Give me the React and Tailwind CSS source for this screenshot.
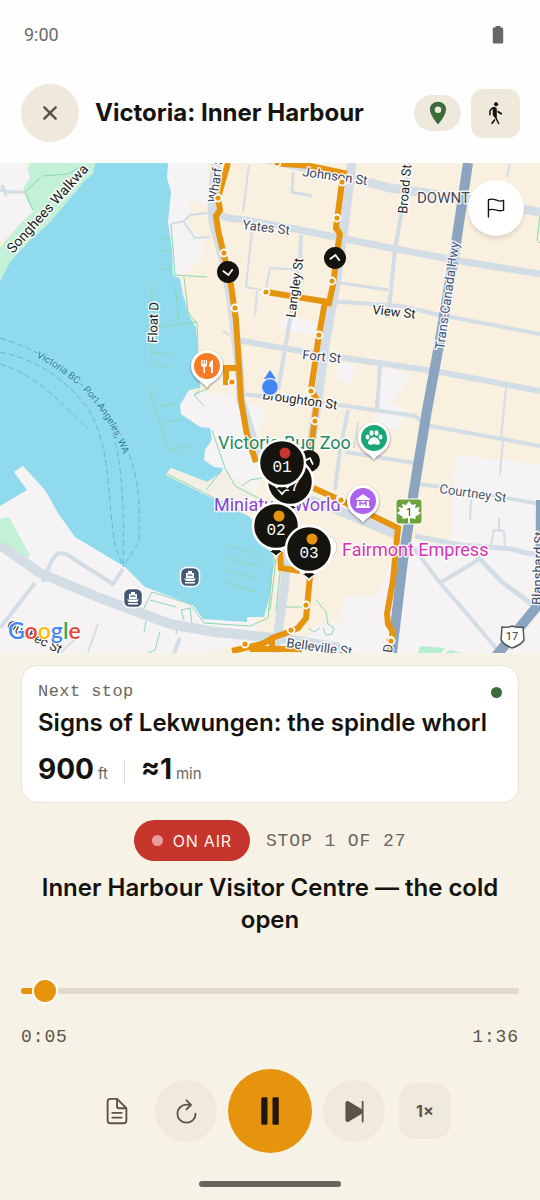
import React, { useState } from 'react';
import {
  IoClose,
  IoDocumentTextOutline,
  IoFlagOutline,
  IoLocationSharp,
  IoPause,
  IoPlaySkipForward,
  IoRefreshOutline,
  IoWalk,
} from 'react-icons/io5';

const MONO = "font-['Liberation_Mono',monospace]";

// road centre lines, grouped by stroke width
const roads = [
  { w: 10, d: 'M0 545 40 573 100 598 170 624 215 632 285 639 340 648' },
  { w: 9, d: 'M216 163 212 205 213 222 224 262 231 300 239 365 241 400 255 446 290 494 320 503 400 536' },
  { w: 9, d: 'M352 163 345 220 335 290 325 345 318 400 310 450 300 485 290 530 284 590 275 653' },
  { w: 9, d: 'M262 158 340 175 390 188 420 192 470 200 540 212' },
  { w: 7, d: 'M215 213 228 218 245 220 290 228 380 246 460 261 540 274' },
  { w: 6, d: 'M238 340 270 346 345 358 440 372 540 391' },
  { w: 5, d: 'M415 536 460 545 512 549 526 553 540 555M477 556 502 582 540 610' },
  { w: 4, d: 'M410 163 395 250 388 318M301 235 300 262 290 320 278 390' },
  { w: 4, d: 'M330 301 400 306 440 315 540 334M240 394 270 397 340 405 415 416 425 425 540 446' },
  { w: 4, d: 'M348 410 340 450 335 490M345 452 414 463M418 484 450 488 540 504' },
  { w: 4, d: 'M380 366 377 410M43 582 52 560 58 553 66 554 113 584 123 569M35 583 0 628' },
  { w: 4, d: 'M180 638 174 653M414 548 440 583 462 608 500 653M440 583 478 560' },
  { w: 3, d: 'M0 190 8 192 25 192M2 185 6 196M293 172 292 192 312 196M335 282 388 290' },
  { w: 2, d: 'M171 224 184 221 190 215 208 213M183 221 195 238 210 237' },
  { w: 2, d: 'M249 165 243 212M252 230 246 287 266 291M257 291 255 315M270 268 300 270M270 268 266 290' },
  { w: 2, d: 'M506 388 501 438M503 440 500 475M471 500 470 520M491 545 494 530 504 531 505 548M499 530V518' },
  { w: 2, d: 'M98 624 88 652M60 653 74 640M358 422 354 448M510 163 507 177M376 400V410M223 331 229 335' },
];

const piers = [
  'M171 224 175 275 207 277M184 277 188 312 197 324 198 350M158 270 172 268M160 250 171 252',
  'M162 240 172 238M152 285V365M152 328 197 322M152 352 172 354M152 366H168M175 284 179 322',
  'M150 390 168 450 190 446M160 406 178 404M166 422 183 419M200 390 194 395 204 406M194 395 209 388',
  'M212 430 225 468 235 486 262 500M167 474 240 511M222 470 206 490M242 486 250 480 262 478',
  'M228 545 262 555M228 558 260 567M226 570 258 580M225 582 256 592',
  'M142 612 152 592 190 604 204 623 250 626 268 618 272 570 278 550M148 610 144 632',
  'M150 600 176 607M178 622 192 624 190 608 181 610 184 620M160 632 155 650 148 653M178 622 176 634',
  'M40 178 25 192 33 210M42 176 68 174 82 166M285 607 308 607M316 600 326 612 328 624 334 628 332 634 326 635 323 628',
  'M308 628 314 632 320 628M276 560 270 610M281 562 276 612M540 215 537 240 540 243',
];

const route = [
  'M228 163 218 198 220 210 216 216 218 230 224 255 231 285 236 320 239 367 241 400 247 435 256 462',
  'M239 368H226V382H232',
  'M274 163 310 166 344 173 342 182 336 228 340 234 338 246 333 285 329 303 325 302 319 335 311 390 317 400 311 450',
  'M266 292 328 302',
  'M300 482 340 500 398 528 393 580 387 614 388 624 393 632 389 653',
  'M280 552 281 568 300 571M310 576 306 618 298 628 286 633 272 638V650M232 651 262 644 275 637M250 649H302',
];

const routeDots = [
  [218, 198], [224, 253], [235, 308], [266, 292], [232, 382], [277, 163], [342, 182], [337, 218], [332, 281],
  [319, 335], [311, 391], [315, 421], [341, 500], [306, 605], [291, 630], [245, 644], [391, 641],
];

const streets = [
  { name: 'Yates St', x: 242, y: 229, r: 7, c: '#3c4660' },
  { name: 'Johnson St', x: 302, y: 176, r: 8, c: '#3c4660' },
  { name: 'View St', x: 372, y: 314, r: 6 },
  { name: 'Fort St', x: 302, y: 359, r: 6, c: '#3c4660' },
  { name: 'Broughton St', x: 262, y: 399, r: 8 },
  { name: 'Courtney St', x: 439, y: 493, r: 8, c: '#4b5868' },
  { name: 'Belleville St', x: 286, y: 647, r: 8, c: '#3c4660' },
  { name: 'Wharf St', x: 217, y: 203, r: -82, c: '#3c4660', s: 13 },
  { name: 'Broad St', x: 407, y: 214, r: -85 },
  { name: 'Langley St', x: 295, y: 318, r: -82 },
  { name: 'Float D', x: 157, y: 343, r: -88 },
  { name: 'Songhees Walkwa', x: 13, y: 254, r: -48, s: 14 },
  { name: 'Trans-Canada Hwy', x: 444, y: 350, r: -82, c: '#45557f' },
  { name: 'Blanshard St', x: 541, y: 605, r: -88, c: '#3c4660' },
  { name: 'Quebec St', x: 6, y: 628, r: 26 },
  { name: 'Do', x: 392, y: 653, r: -84, c: '#3c4660' },
];

const MapLabel = ({ x, y, r = 0, c = '#1d1f24', s = 13, children }) => (
  <text
    transform={`translate(${x} ${y}) rotate(${r})`}
    fill={c}
    stroke="#fff"
    strokeOpacity="0.85"
    strokeWidth="3"
    strokeLinejoin="round"
    paintOrder="stroke"
    fontSize={s}
  >
    {children}
  </text>
);

const Chevron = ({ x, y, r = 0 }) => (
  <g transform={`translate(${x} ${y}) rotate(${r})`}>
    <circle r="11" fill="#15130e" />
    <path d="M-5 2 0-3 5 2" fill="none" stroke="#fff" strokeWidth="1.8" />
  </g>
);

const PlacePin = ({ x, y, color, children }) => (
  <g transform={`translate(${x} ${y})`}>
    <path
      d="M0 21C-3 15-16 12-16-1A16 16 0 0 1 16-1C16 12 3 15 0 21Z"
      fill="#fff"
      className="drop-shadow-[0_1px_1px_rgba(0,0,0,0.45)]"
    />
    <circle r="13" cy="-1" fill={color} />
    {children}
  </g>
);

const StopPin = ({ x, y, dot, children }) => (
  <g transform={`translate(${x} ${y})`}>
    <path d="M-8 21 0 31 8 21Z" fill="#15130e" stroke="#fff" strokeWidth="2" />
    <circle r="23" fill="#15130e" stroke="#fff" strokeWidth="2.5" />
    <path d="M-6 25H6L0 29Z" fill="#15130e" />
    <circle cx="3" cy="-10" r="5.5" fill={dot} />
    <text y="9" textAnchor="middle" fontSize="16" fill="#fff" className={MONO}>{children}</text>
  </g>
);

const FerryStop = ({ x, y }) => (
  <g transform={`translate(${x} ${y})`}>
    <rect x="-9.500" y="-9.500" width="19" height="19" rx="6" fill="#445a74" stroke="#fff" strokeWidth="1.5" />
    <path d="M-2-6H2V-4H4V1H-4V-4H-2ZM-6 1.500H6L4 4H-4ZM-5 5H5V6.500H-5Z" fill="#fff" />
    <path d="M-2.500-2.500H2.500V-1.300H-2.500Z" fill="#445a74" />
  </g>
);

const TourMap = () => (
  <svg
    viewBox="0 163 540 490"
    className="block h-auto w-full font-[Roboto,sans-serif]"
    role="img"
    aria-label="Map of Victoria Inner Harbour"
  >
    <rect y="163" width="540" height="490" fill="#f9f0df" />

    {/* lighter blocks */}
    <g fill="#f5f3f4">
      <path d="M160 163H208L207 205 190 200 188 225 206 240 200 262 180 275H165Z" />
      <path d="M175 390 235 395 245 440 262 478 250 500 200 470Z" />
      <path d="M455 455 540 464V653H350L402 540 450 545Z" />
      <path d="M0 653V460L240 560 260 640 205 653Z" />
      <path d="M345 595H440V653H300L312 628 340 620ZM382 367 412 374 395 400 378 410Z" />
      <path d="M283 315 320 322 312 335 280 330ZM338 362 355 366 350 385 337 380ZM236 400 265 408 258 440 245 425Z" />
      <path d="M376 400 405 408 400 430 375 425Z" />
    </g>

    {/* harbour */}
    <path
      d="M95 163H168L167 178 171 192 168 222 172 250 173 275 180 279 183 295 189 315 196 328 199 365 200 388 189 390 180 405 181 414 200 427 210 428 212 439 205 450 204 460 214 467 223 468 218 478 207 482 171 468 166 475 202 493 250 517 266 540 274 555 271 590 264 617 247 617V622L203 619 193 605 145 587 125 567 75 537 58 513 45 490 23 466 14 472 27 490 0 506V281L10 262 30 240 50 222 85 180 93 174Z"
      fill="#90daee"
    />
    <path d="M95 163H30L22 180 24 192 30 212 0 248V281L10 262 30 240 50 222 85 180 93 174Z" fill="#c2f1d7" />
    <path d="M0 163H26L30 178 22 190 33 212 0 242Z" fill="#f5f3f4" />
    <path d="M0 519 9 517 30 555 24 562 0 546Z" fill="#c2f1d7" />
    <path d="M420 646 445 648 441 653H418ZM450 650 462 653H445Z" fill="#b5efce" />
    <path d="M166 475 171 468 207 482 225 470 262 500 256 516 202 493Z" fill="#f3efe4" />

    <g fill="none" stroke="#5cbcd4" strokeDasharray="6 3">
      <path d="M0 338C40 350 70 370 95 400 120 430 125 480 123 567" />
      <path d="M0 352C40 360 65 380 88 408 112 450 106 490 115 545L123 567" />
      <path d="M0 364C45 378 70 415 88 428M118 430C134 460 139 485 139 510V542L123 567" />
    </g>

    <g fill="none" stroke="#8bd8b4" strokeWidth="1">
      {piers.map((d) => <path key={d} d={d} />)}
    </g>

    <g fill="none" stroke="#d3dde5" strokeLinejoin="round">
      {roads.map(({ w, d }) => <path key={d} d={d} strokeWidth={w} />)}
    </g>
    <g fill="none" stroke="#8ba5c1" strokeWidth="10">
      <path d="M468 163 455 250 440 340 427 410 414 490 403 560 392 653" />
      <path d="M541 500 540 603 496 656" />
    </g>

    <g fill="none" stroke="#e6930e" strokeWidth="6">
      {route.map((d) => <path key={d} d={d} />)}
    </g>

    {streets.map(({ name, ...pos }) => <MapLabel key={name} {...pos}>{name}</MapLabel>)}
    <MapLabel x={417} y={203} c="#4a4a50" s={15}>DOWNT</MapLabel>
    <MapLabel x={218} y={449} c="#1d8a62" s={18}>Victoria Bug Zoo</MapLabel>
    <MapLabel x={214} y={511} c="#8642d8" s={18}>Miniature World</MapLabel>

    <path id="ferry-line" d="M36 357C80 380 108 410 126 462" fill="none" />
    <text fontSize="10" fill="#22809c" stroke="#a7e4f3" strokeWidth="1" paintOrder="stroke">
      <textPath href="#ferry-line">Victoria BC - Port Angeles, WA</textPath>
    </text>

    {routeDots.map(([x, y]) => (
      <circle key={`${x}-${y}`} cx={x} cy={y} r="3.500" fill="#e6930e" stroke="#fff" strokeWidth="1.8" />
    ))}

    <Chevron x={228} y={272} r={172} />
    <Chevron x={335} y={258} r={8} />
    <Chevron x={309} y={461} r={20} />

    <PlacePin x={207} y={367} color="#fa7b26">
      <path d="M-6-7V-3Q-6 0-3.500 0V6H-2V0Q0 0 0-3V-7H-1.200V-3H-2.200V-7H-3.400V-3H-4.500V-7ZM6-7Q2-6 2 0H4V6H6Z" fill="#fff" />
    </PlacePin>
    <PlacePin x={374} y={439} color="#1aa777">
      <g fill="#fff">
        <ellipse cx="-6.500" cy="-2" rx="2" ry="2.600" />
        <ellipse cx="-2.500" cy="-6" rx="2" ry="2.800" />
        <ellipse cx="2.500" cy="-6" rx="2" ry="2.800" />
        <ellipse cx="6.500" cy="-2" rx="2" ry="2.600" />
        <path d="M0-2C3-2 6 2 6 4 6 6 3 6 0 5-3 6-6 6-6 4-6 2-3-2 0-2Z" />
      </g>
    </PlacePin>
    <PlacePin x={363} y={502} color="#ad61f1">
      <path d="M-7-3 0-8 7-3V-2H-7ZM-6-1H6V4H7V6H-7V4H-6Z" fill="#fff" />
      <path d="M-3 4V0L0 2 3 0V4" fill="none" stroke="#ad61f1" strokeWidth="1.500" />
    </PlacePin>

    <rect x="396" y="499" width="26" height="25" rx="3" fill="#6ea23d" stroke="#fff" strokeWidth="1" />
    <path
      d="M409 501 412 505 416 504 415 508 420 507 418 511 421 513 415 517 416 519 410 518V523H408V518L402 519 403 517 397 513 400 511 398 507 403 508 402 504 406 505Z"
      fill="#fff"
    />
    <text x="409" y="516" textAnchor="middle" fontSize="11" fill="#333">1</text>

    <path
      d="M502 627Q507 628 512 626 517 628 523 627L524 640Q521 645 512 648 504 645 501 640Z"
      fill="#fff"
      stroke="#55575c"
      strokeWidth="1.500"
    />
    <text x="512" y="640" textAnchor="middle" fontSize="11" fill="#333">17</text>

    <FerryStop x={190} y={577} />
    <FerryStop x={133} y={598} />

    <path d="M270 370 276 379H264Z" fill="#4285f4" />
    <circle cx="270" cy="387" r="8.500" fill="#4285f4" stroke="#dfe9f7" strokeWidth="1.500" />

    <circle cx="325" cy="547" r="12" fill="#fff" stroke="#d8d2d0" />
    <StopPin x={290} y={482} dot="#15130e">27</StopPin>
    <StopPin x={282} y={463} dot="#c5352b">01</StopPin>
    <StopPin x={276} y={526} dot="#e6930e">02</StopPin>
    <StopPin x={309} y={549} dot="#e6930e">03</StopPin>
    <MapLabel x={342} y={556} c="#d633b4" s={18}>Fairmont Empress</MapLabel>

    <text
      x="8"
      y="639"
      fontSize="23"
      fontWeight="600"
      stroke="#fff"
      strokeWidth="2"
      paintOrder="stroke"
      className="font-[Lato,sans-serif]"
    >
      <tspan fill="#4285f4">G</tspan>
      <tspan fill="#ea4335">o</tspan>
      <tspan fill="#fbbc04">o</tspan>
      <tspan fill="#4285f4">g</tspan>
      <tspan fill="#34a853">l</tspan>
      <tspan fill="#ea4335">e</tspan>
    </text>
  </svg>
);

const StatusBar = () => (
  <div className="flex items-center justify-between pt-6 pl-6 pr-9 font-[Roboto,sans-serif] text-lg leading-[22px] text-[#6b6b6b]">
    <span>9:00</span>
    <svg width="12" height="18" viewBox="0 0 12 18" fill="#666" aria-hidden="true">
      <path d="M3.500 0h5v1.500H10a1.200 1.200 0 0 1 1.200 1.200v13.600A1.200 1.200 0 0 1 10 17.500H2a1.200 1.200 0 0 1-1.200-1.200V2.700A1.200 1.200 0 0 1 2 1.500h1.500z" />
    </svg>
  </div>
);

const Header = () => (
  <header className="flex items-center pt-[38px] pr-5 pb-[21px] pl-[21px]">
    <button aria-label="Close" className="flex size-[58px] shrink-0 items-center justify-center rounded-full bg-[#efe9dc] text-[#5b5348]">
      <IoClose size={26} />
    </button>
    <h1 className="ml-4 min-w-0 flex-1 truncate text-2xl leading-8 font-bold">Victoria: Inner Harbour</h1>
    <button aria-label="Location" className="mr-[10px] flex h-9 w-[47px] items-center justify-center rounded-full bg-[#efe9dc] text-[#3d6b3a]">
      <IoLocationSharp size={26} />
    </button>
    <button aria-label="Walking" className="flex size-[49px] items-center justify-center rounded-xl bg-[#efe9dc]">
      <IoWalk size={24} />
    </button>
  </header>
);

const NextStop = () => (
  <section className="rounded-[17px] border border-[#ebe4d2] bg-white px-4 pt-4 pb-3">
    <div className="flex items-center justify-between">
      <span className={`text-[17px] leading-5 tracking-wide text-[#6b675e] ${MONO}`}>Next stop</span>
      <span className="size-[11px] rounded-full bg-[#3d6b3a]" />
    </div>
    <h2 className="mt-[6px] truncate text-2xl leading-[30px] font-semibold">Signs of Lekwungen: the spindle whorl</h2>
    <div className="mt-[15px] flex items-center leading-8">
      <p className="flex items-baseline gap-1">
        <span className="text-[28px] font-bold">900</span>
        <span className="text-[15px] text-[#6b675e]">ft</span>
      </p>
      <span className="mx-4 h-6 w-px bg-[#e6dfcf]" />
      <p className="flex items-baseline gap-1">
        <span className="text-[28px] font-bold">≈1</span>
        <span className="text-[15px] text-[#6b675e]">min</span>
      </p>
    </div>
  </section>
);

const Scrubber = () => {
  const [pos, setPos] = useState(4.7);

  return (
    <div className="mt-[42px]">
      <div className="grid items-center">
        <div className="h-[6px] overflow-hidden rounded-full bg-[#dfdac9] [grid-area:1/1]">
          <div className="h-full bg-[#e6930e]" style={{ width: `${(pos / 96) * 100}%` }} />
        </div>
        <input
          type="range"
          aria-label="Playback position"
          min="0"
          max="96"
          step="0.1"
          value={pos}
          onChange={(e) => setPos(Number(e.target.value))}
          className="-mx-[13px] h-[26px] appearance-none bg-transparent [grid-area:1/1] [&::-webkit-slider-thumb]:size-[26px] [&::-webkit-slider-thumb]:appearance-none [&::-webkit-slider-thumb]:rounded-full [&::-webkit-slider-thumb]:border-2 [&::-webkit-slider-thumb]:border-white [&::-webkit-slider-thumb]:bg-[#e6930e]"
        />
      </div>
      <div className={`mt-[21px] flex justify-between text-lg leading-6 tracking-wider text-[#5b5648] ${MONO}`}>
        <span>0:05</span>
        <span>1:36</span>
      </div>
    </div>
  );
};

const Controls = () => (
  <div className="mt-5 flex items-center justify-center gap-[11px] text-[#5b5348]">
    <button aria-label="Transcript" className="flex h-[62px] w-[55px] items-center justify-center">
      <IoDocumentTextOutline size={30} />
    </button>
    <button aria-label="Replay" className="flex size-[62px] items-center justify-center rounded-full bg-[#f0eadd]">
      <IoRefreshOutline size={29} />
    </button>
    <button aria-label="Pause" className="flex size-[84px] items-center justify-center rounded-full bg-[#e6930e] text-[#1f1807]">
      <IoPause size={40} />
    </button>
    <button aria-label="Next stop" className="flex size-[62px] items-center justify-center rounded-full bg-[#f0eadd]">
      <IoPlaySkipForward size={29} />
    </button>
    <button className="ml-[3px] flex h-14 w-[52px] items-center justify-center rounded-2xl bg-[#f0eadd] text-base font-bold">
      1×
    </button>
  </div>
);

export default function App() {
  return (
    <div className="min-h-screen bg-[#f7f2e6] font-[Inter,sans-serif] text-[#15130e]">
      <div className="bg-[#fefefe]">
        <StatusBar />
        <Header />
      </div>

      <div className="relative">
        <TourMap />
        <button
          aria-label="Flag this stop"
          className="absolute top-[17px] right-4 flex size-14 items-center justify-center rounded-full bg-white shadow-md"
        >
          <IoFlagOutline size={22} />
        </button>
      </div>

      <main className="px-[21px] pt-3">
        <NextStop />
        <div className="mt-[17px] flex items-center justify-center gap-4">
          <span className="flex h-[41px] items-center gap-[10px] rounded-full bg-[#c5352b] px-[18px] text-base tracking-wider text-[#fdf3ea]">
            <span className="size-[11px] rounded-full bg-[#eb9c9c]" />
            ON AIR
          </span>
          <span className={`text-lg tracking-wider text-[#6b675e] ${MONO}`}>STOP 1 OF 27</span>
        </div>
        <h2 className="mt-[11px] text-center text-2xl leading-8 font-semibold">
          Inner Harbour Visitor Centre — the cold open
        </h2>
        <Scrubber />
        <Controls />
      </main>

      <div className="mx-auto mt-7 h-[6px] w-[142px] rounded-full bg-[#69645e]" />
    </div>
  );
}
